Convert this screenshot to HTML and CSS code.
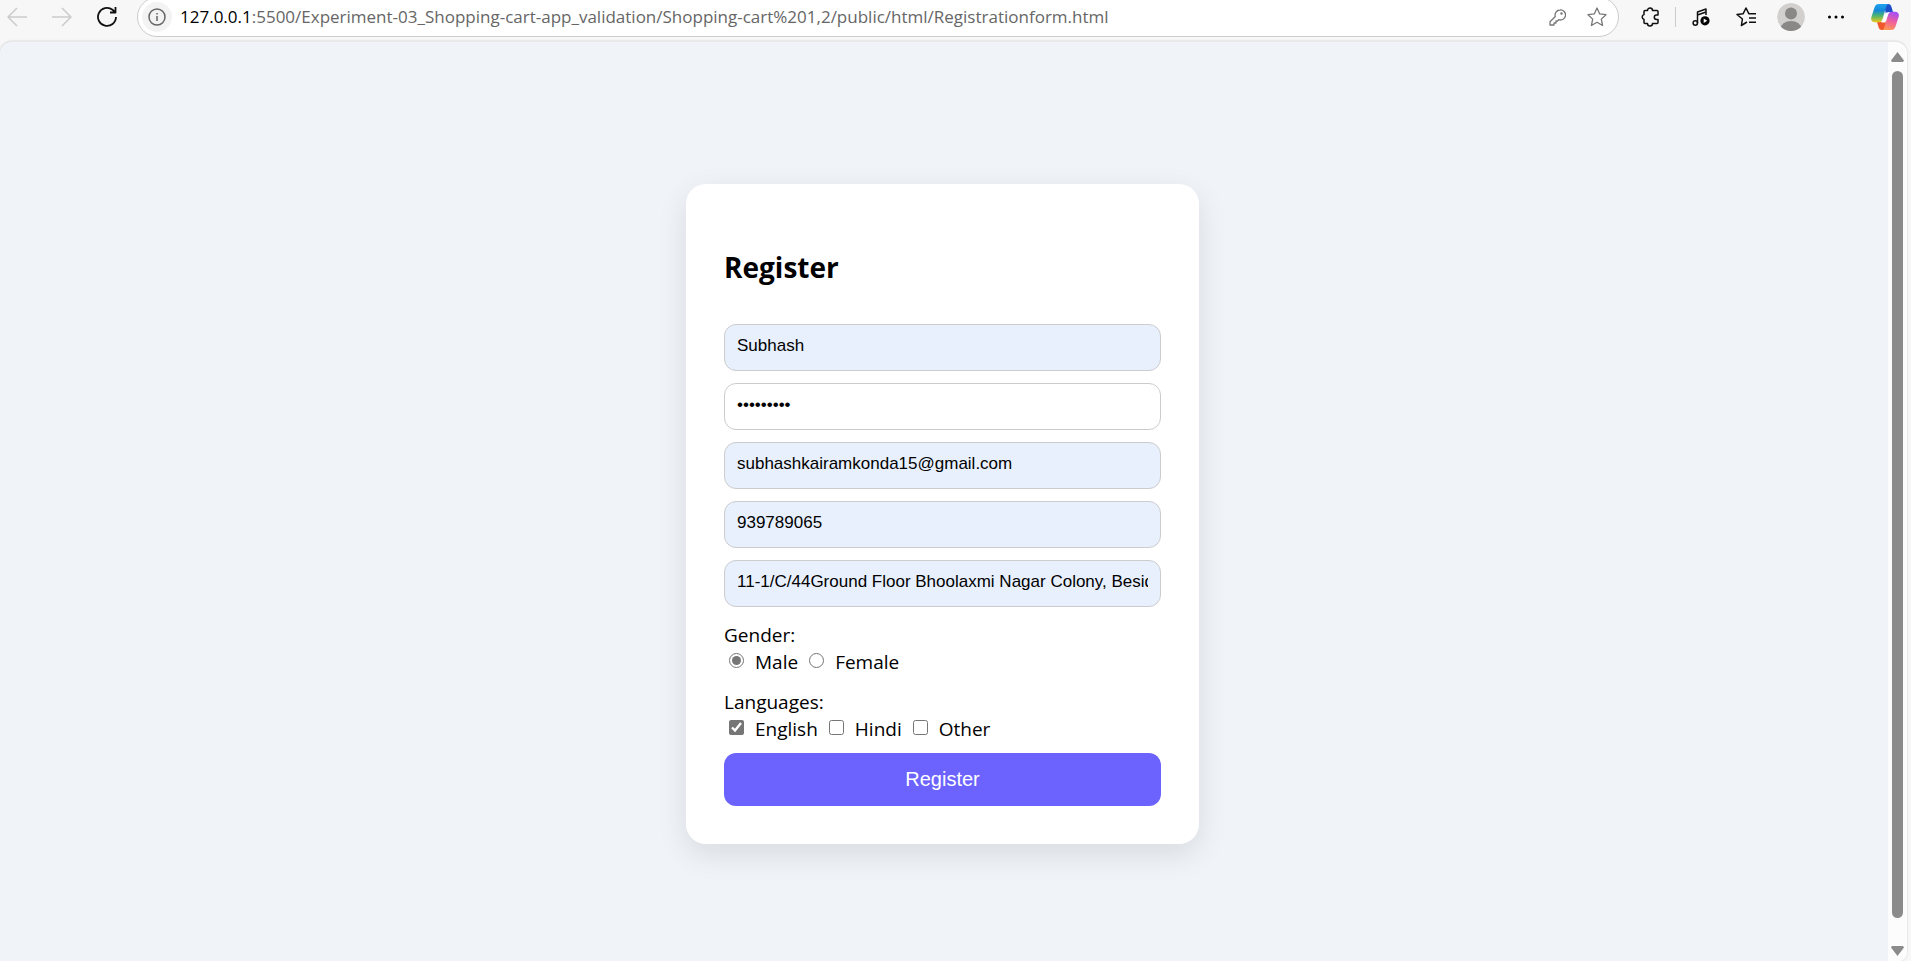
FILE: index.html
```html
<!DOCTYPE html>
<html lang="en">
<head>
<meta charset="utf-8">
<title>Register</title>
<link rel="stylesheet" href="styles.css">
</head>
<body>
<header class="toolbar">
  <nav class="nav" aria-label="History">
    <button class="tool tool-faint" aria-label="Back"><svg width="20" height="20" viewBox="0 0 20 20"><path d="M10 1 1 10l9 9M1 10h19"/></svg></button>
    <button class="tool tool-faint" aria-label="Forward"><svg width="20" height="20" viewBox="0 0 20 20"><path d="m10 1 9 9-9 9M19 10H0"/></svg></button>
    <button class="tool tool-bold" aria-label="Refresh"><svg width="20" height="22" viewBox="0 0 20 22"><path d="M19 11a9 9 0 1 1-3.500-7.200l2.500 2.200M18.500 1v5.500H13"/></svg></button>
  </nav>
  <div class="address">
    <button class="info" aria-label="Site information"><svg width="18" height="18" viewBox="0 0 18 18"><circle cx="9" cy="9" r="8"/><path d="M9 8v5M9 5v1.500"/></svg></button>
    <p class="url"><span class="host">127.0.0.1</span>:5500/Experiment-03_Shopping-cart-app_validation/Shopping-cart%201,2/public/html/Registrationform.html</p>
    <button class="tool tool-gray" aria-label="Saved passwords"><svg width="17" height="17" viewBox="0 0 17 17"><path d="M11 1a5 5 0 1 1-1.300 9.600L8.500 12H7v2H5v2H1v-3.200l5.300-5.300A5 5 0 0 1 11 1z"/><circle cx="12.500" cy="4.500" r=".6"/></svg></button>
    <button class="tool tool-gray" aria-label="Add to favorites"><svg width="20" height="20" viewBox="0 0 20 20"><path d="m10 1 2.700 5.900 6.300.8-4.700 4.400 1.300 6.400L10 15.300l-5.600 3.200 1.300-6.400L1 7.700l6.300-.8z"/></svg></button>
  </div>
  <div class="tools">
    <button class="tool" aria-label="Extensions"><svg width="20" height="20" viewBox="0 0 20 20"><path d="M5 3.500h2.500a2.500 2.500 0 0 1 5 0H17a1 1 0 0 1 1 1V8h-1.500a2.200 2.200 0 0 0 0 4.400H18v3.100a1 1 0 0 1-1 1h-4.500a2.500 2.500 0 0 1-5 0H5a1 1 0 0 1-1-1v-3.100a2.500 2.500 0 0 1 0-4.800V4.500a1 1 0 0 1 1-1z"/></svg></button>
    <span class="divider"></span>
    <button class="tool" aria-label="Media controls"><svg width="18" height="18" viewBox="0 0 18 18"><path d="M5.500 15V4L14 1v6M5.500 7 14 4"/><circle cx="3.300" cy="15" r="2.200"/><circle class="fill" cx="13" cy="12.800" r="4.600"/><path class="paper" d="m11.700 10.500 3.500 2.300-3.500 2.300z"/></svg></button>
    <button class="tool" aria-label="Favorites"><svg width="20" height="20" viewBox="0 0 20 20"><path d="m11 15-5.600 3.500 1-6.500L1 7.500l6.200-.8L10 1l2.800 5.700H20M13 11h7M13 15.200h7"/></svg></button>
    <button class="tool" aria-label="Profile"><svg width="28" height="28" viewBox="0 0 28 28"><defs><clipPath id="disc"><circle cx="14" cy="14" r="14"/></clipPath></defs><g class="avatar" clip-path="url(#disc)"><circle class="avatar-back" cx="14" cy="14" r="14"/><circle class="avatar-person" cx="14" cy="10.500" r="6"/><ellipse class="avatar-person" cx="14" cy="26" rx="10.500" ry="8"/></g></svg></button>
    <button class="tool" aria-label="Settings and more"><svg width="18" height="4" viewBox="0 0 18 4"><g class="fill"><circle cx="2.500" cy="2" r="1.500"/><circle cx="9" cy="2" r="1.500"/><circle cx="15.500" cy="2" r="1.500"/></g></svg></button>
    <button class="tool tool-wide" aria-label="Copilot"><svg width="28" height="26" viewBox="0 0 28 26">
      <defs>
        <linearGradient id="cool" x1="0" y1="0" x2="0" y2="1"><stop offset="0" stop-color="#1ba4f0"/><stop offset=".35" stop-color="#1487d8"/><stop offset=".65" stop-color="#4fb56c"/><stop offset="1" stop-color="#f0c81a"/></linearGradient>
        <linearGradient id="warm" x1=".6" y1="0" x2=".3" y2="1"><stop offset="0" stop-color="#a550f5"/><stop offset=".5" stop-color="#f0609c"/><stop offset="1" stop-color="#ff9a50"/></linearGradient>
      </defs>
      <g class="logo">
        <path fill="#1c50c8" d="M13 0h4c2 0 3 1 3.500 3L22 8h-3c-2 0-3.300 1-4 3z"/>
        <path fill="#f0582c" d="M6 18h5c1.500 0 2-1 2.500-3l2 6-2 5H11c-2 0-3-1-3.500-3z"/>
        <path fill="url(#cool)" d="M8 0h10c-1.500 0-2.200 1-2.700 2.600L11.500 15c-.7 2-1.500 3.300-3.500 3.300H4c-3 0-4.500-2-3.600-5.200L3.500 3.500C4.300 1 5.500 0 8 0z"/>
        <path fill="url(#warm)" d="M20 26H10.500c1.500 0 2.200-1 2.700-2.600L17 11c.7-2 1.500-3.300 3.500-3.300H24c3 0 4.500 2 3.600 5.200L24.500 22.500C23.700 25 22.500 26 20 26z"/>
        <path fill="#fff" d="M15 8.500h3.500c-1 .5-1.600 1.400-2 2.700L14 18.500h-4c1 0 1.700-1.500 2.100-2.700z"/>
      </g></svg></button>
  </div>
</header>
<div class="viewport">
  <main class="page">
    <form class="card">
      <h2 class="title">Register</h2>
      <div class="fields">
        <input class="field filled" type="text" aria-label="Username" value="Subhash">
        <input class="field" type="password" aria-label="Password" value="password1">
        <input class="field filled" type="email" aria-label="Email" value="subhashkairamkonda15@gmail.com">
        <input class="field filled" type="tel" aria-label="Phone" value="939789065">
        <input class="field filled" type="text" aria-label="Address" value="11-1/C/44Ground Floor Bhoolaxmi Nagar Colony, Beside">
      </div>
      <fieldset class="group">
        <legend>Gender:</legend>
        <div class="options">
          <label class="option"><input class="radio" type="radio" name="gender" checked>Male</label>
          <label class="option"><input class="radio" type="radio" name="gender">Female</label>
        </div>
      </fieldset>
      <fieldset class="group">
        <legend>Languages:</legend>
        <div class="options">
          <label class="option"><input class="check" type="checkbox" checked>English</label>
          <label class="option"><input class="check" type="checkbox">Hindi</label>
          <label class="option"><input class="check" type="checkbox">Other</label>
        </div>
      </fieldset>
      <button class="submit" type="button">Register</button>
    </form>
  </main>
  <div class="scrollbar" aria-hidden="true">
    <svg width="13" height="10" viewBox="0 0 13 10"><path d="M6.500 0 13 8.500 12 10H1L0 8.500z"/></svg>
    <div class="thumb"></div>
    <svg width="13" height="10" viewBox="0 0 13 10"><path d="M6.500 10 0 1.500 1 0h11l1 1.500z"/></svg>
  </div>
</div>
</body>
</html>
```

FILE: styles.css
```css
* { box-sizing: border-box; }
html, body { height: 100%; }
body {
  display: flex;
  flex-direction: column;
  margin: 0;
  overflow: hidden;
  background: #f7f7f7;
  color: #000;
  font: 19px/27px "Open Sans", sans-serif;
}
button { padding: 0; border: 0; background: none; }

/* Browser toolbar */
.toolbar { display: flex; align-items: flex-start; height: 41px; overflow: hidden; }
.nav, .tools { display: flex; align-items: center; height: 34px; }
.nav { width: 137px; gap: 11px; }
.tool { display: flex; flex: none; align-items: center; justify-content: center; width: 34px; height: 34px; }
.tool svg, .info svg { fill: none; stroke: #111; stroke-width: 1.5; stroke-linejoin: round; }
.tool-faint svg { stroke: #ccc; }
.tool-bold svg { stroke-width: 1.8; }
.tool-gray svg { stroke: #777; stroke-width: 1.3; }
.tool svg .fill { fill: #000; stroke: none; }
.tool svg .paper { fill: #fff; stroke: none; }
.tool svg .logo, .tool svg .avatar { stroke: none; }
.avatar-back { fill: #d2d0ce; }
.avatar-person { fill: #8a8886; }
.tool-wide { margin-left: 4px; }
.divider { width: 1px; height: 20px; margin: 0 -3px; background: #ccc; }
.address {
  display: flex;
  flex: 1;
  align-items: center;
  gap: 6px;
  min-width: 0;
  height: 40px;
  margin-top: -3px;
  padding: 0 4px;
  border: 1px solid #ccc;
  border-radius: 20px;
  background: #fff;
}
.info { display: flex; flex: none; align-items: center; justify-content: center; width: 30px; height: 30px; border-radius: 50%; background: #f3f3f3; }
.info svg { stroke: #666; }
.url { flex: 1; min-width: 0; margin: 0 0 0 2px; overflow: hidden; color: #666; font-size: 17px; line-height: 26px; white-space: nowrap; }
.host { color: #000; }
.tools { gap: 11px; padding: 0 9px 0 14px; }

/* Page area */
.viewport {
  display: flex;
  flex: 1;
  min-height: 0;
  margin-right: 4px;
  overflow: hidden;
  border-top: 1px solid #e9e9e9;
  border-radius: 12px 12px 8px 0;
  background: #f0f4f8;
  box-shadow: 0 0 2px rgba(0, 0, 0, .2);
}
.page { display: flex; flex: 1; align-items: center; justify-content: center; padding: 24px 3px 0 0; }
.card {
  width: 513px;
  padding: 38px;
  border-radius: 20px;
  background: #fff;
  box-shadow: 0 10px 30px rgba(0, 0, 0, .1);
}
.title { margin: 26px 0 38px; font-size: 28px; line-height: 38px; }
.fields { display: flex; flex-direction: column; gap: 12px; margin-bottom: 15px; }
.field {
  width: 100%;
  height: 47px;
  padding: 0 12px 2px;
  border: 1px solid #ccc;
  border-radius: 12px;
  background: #fff;
  color: #000;
  font: 17px "Liberation Sans", Arial, sans-serif;
}
.filled { background: #e8f0fe; }
.group { margin: 0 0 13px; padding: 0; border: 0; }
.group legend { padding: 0; }
.options { display: flex; gap: 11px; padding-left: 5px; }
.option { display: flex; align-items: center; gap: 11px; }
.radio, .check { width: 15px; height: 15px; margin: 0 0 3px; accent-color: #767676; }
.submit {
  display: block;
  width: 100%;
  height: 53px;
  border-radius: 12px;
  background: #6c63ff;
  color: #fff;
  font: 20px "Liberation Sans", Arial, sans-serif;
}
.group + .submit { margin-top: -3px; }

/* Scrollbar */
.scrollbar { display: flex; flex-direction: column; align-items: center; gap: 9px; width: 19px; padding: 10px 0 5px; background: #fcfcfc; }
.scrollbar svg { flex: none; fill: #8b8b8b; }
.thumb { flex: 1; width: 11px; margin-bottom: 19px; border-radius: 6px; background: #8b8b8b; }
```
